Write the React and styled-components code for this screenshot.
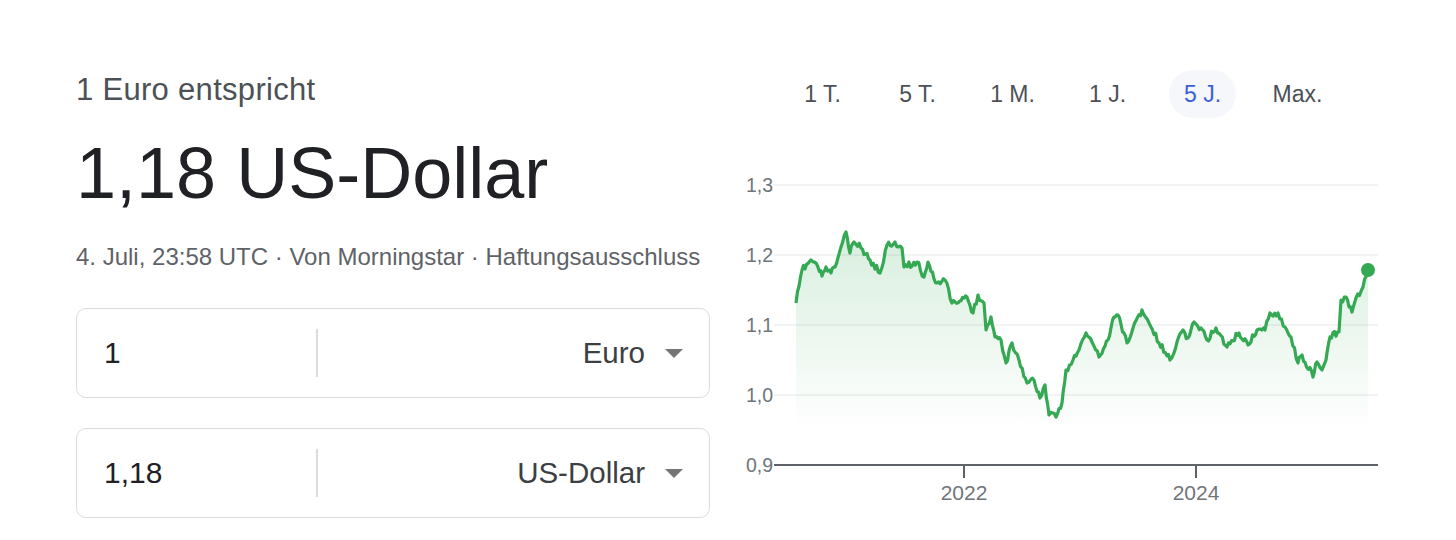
import React from 'react';
import styled, { createGlobalStyle } from 'styled-components';

const GlobalStyle = createGlobalStyle`
  body {
    margin: 0;
    background: #fff;
    font-family: "Liberation Sans", Arial, sans-serif;
  }
`;

const Page = styled.div`
  display: flex;
  gap: 26px;
  padding: 70px 0 0 76px;
`;

const Converter = styled.div`
  width: 634px;
  display: flex;
  flex-direction: column;
`;

const Subtitle = styled.div`
  font-size: 31px;
  line-height: 40px;
  color: #4d5156;
  letter-spacing: 0.3px;
`;

const Result = styled.div`
  margin-top: 21px;
  font-size: 72px;
  line-height: 84px;
  color: #202124;
`;

const Meta = styled.div`
  margin-top: 26px;
  font-size: 24px;
  line-height: 32px;
  color: #5f6368;
  white-space: nowrap;
`;

const Fields = styled.div`
  margin-top: 35px;
  display: flex;
  flex-direction: column;
  gap: 30px;
`;

const Field = styled.div`
  height: 90px;
  box-sizing: border-box;
  border: 1.5px solid #dadce0;
  border-radius: 10px;
  display: flex;
  align-items: center;
`;

const Amount = styled.div`
  width: 239px;
  box-sizing: border-box;
  padding-left: 27px;
  font-size: 30px;
  color: #202124;
`;

const Divider = styled.div`
  width: 1.5px;
  height: 48px;
  background: #dadce0;
`;

const Currency = styled.div`
  flex: 1;
  display: flex;
  justify-content: flex-end;
  align-items: center;
  gap: 20px;
  padding-right: 26px;
  font-size: 29.5px;
  color: #3c4043;
`;

const Caret = styled.span`
  width: 0;
  height: 0;
  border-left: 9px solid transparent;
  border-right: 9px solid transparent;
  border-top: 9px solid #757575;
`;

const ChartPanel = styled.div`
  width: 644px;
  display: flex;
  flex-direction: column;
`;

const Ranges = styled.div`
  display: grid;
  grid-template-columns: repeat(6, 95px);
  justify-content: center;
  margin-left: 4px;
`;

const Range = styled.div`
  justify-self: center;
  height: 48px;
  padding: 0 15px;
  border-radius: 24px;
  display: flex;
  align-items: center;
  font-size: 23px;
  color: ${(p) => (p.$active ? '#3b5fd8' : '#4d5156')};
  background: ${(p) => (p.$active ? '#f5f7fa' : 'transparent')};
`;

const ChartSvg = styled.svg`
  display: block;
  margin-top: 47px;
  font-family: "Liberation Sans", Arial, sans-serif;
`;

const keyPoints = [
  [60, 138], [66, 105], [75, 95], [82, 102], [86, 111], [90, 102], [95, 108], [99, 102],
  [105, 82], [110, 67], [114, 88], [118, 77], [125, 83], [134, 95], [144, 108], [151, 80],
  [159, 77], [166, 83], [168, 102], [181, 97], [188, 112], [192, 97], [201, 118], [209, 115],
  [216, 138], [222, 138], [231, 132], [237, 148], [242, 130], [248, 138], [250, 165], [255, 152],
  [259, 172], [265, 175], [270, 198], [276, 178], [283, 195], [291, 218], [298, 215], [304, 233],
  [309, 220], [313, 250], [320, 252], [326, 238], [330, 205], [337, 195], [343, 185], [350, 168],
  [356, 177], [363, 192], [372, 175], [378, 152], [382, 150], [391, 178], [397, 163], [406, 145],
  [413, 158], [423, 178], [434, 195], [441, 177], [447, 165], [452, 173], [458, 157], [465, 163],
  [471, 175], [480, 163], [491, 182], [503, 168], [512, 180], [521, 165], [529, 165], [534, 148],
  [542, 148], [549, 162], [555, 172], [562, 198], [566, 190], [577, 212], [581, 197], [586, 205],
  [590, 195], [594, 172], [603, 167], [605, 135], [610, 132], [616, 147], [620, 133], [627, 122],
  [632, 105],
];

// jagged daily-ish series between the key points
const buildSeries = () => {
  let seed = 11;
  const rand = () => {
    seed = (seed * 16807) % 2147483647;
    return seed / 2147483647 - 0.5;
  };
  const pts = [keyPoints[0]];
  for (let i = 1; i < keyPoints.length; i++) {
    const [x0, y0] = keyPoints[i - 1];
    const [x1, y1] = keyPoints[i];
    const steps = Math.max(1, Math.round((x1 - x0) / 1.6));
    for (let s = 1; s <= steps; s++) {
      const t = s / steps;
      const noise = s === steps ? 0 : rand() * 6.5;
      pts.push([x0 + (x1 - x0) * t, y0 + (y1 - y0) * t + noise]);
    }
  }
  return pts;
};

const series = buildSeries();
const linePath = series.map(([x, y], i) => `${i ? 'L' : 'M'}${x.toFixed(1)} ${y.toFixed(1)}`).join(' ');
const last = series[series.length - 1];
const areaPath = `${linePath} L${last[0]} 265 L${series[0][0]} 265 Z`;

const grid = [
  { y: 20, label: '1,3' },
  { y: 90, label: '1,2' },
  { y: 160, label: '1,1' },
  { y: 230, label: '1,0' },
];

const years = [
  { x: 228, label: '2022' },
  { x: 460, label: '2024' },
];

const ranges = ['1 T.', '5 T.', '1 M.', '1 J.', '5 J.', 'Max.'];

const RateChart = () => (
  <ChartSvg width="644" height="345" viewBox="0 0 644 345">
    <defs>
      <linearGradient id="area" x1="0" y1="60" x2="0" y2="265" gradientUnits="userSpaceOnUse">
        <stop offset="0" stopColor="#34a853" stopOpacity="0.2" />
        <stop offset="1" stopColor="#34a853" stopOpacity="0" />
      </linearGradient>
    </defs>
    {grid.map((g) => (
      <g key={g.label}>
        <line x1="38" x2="642" y1={g.y} y2={g.y} stroke="#f1f3f4" strokeWidth="2" />
        <text x="37" y={g.y} textAnchor="end" dominantBaseline="central" fontSize="19.5" fill="#70757a">
          {g.label}
        </text>
      </g>
    ))}
    <path d={areaPath} fill="url(#area)" />
    <path d={linePath} fill="none" stroke="#34a853" strokeWidth="3.2" strokeLinejoin="round" />
    <circle cx={last[0]} cy={last[1]} r="7" fill="#34a853" />
    <line x1="38" x2="642" y1="300" y2="300" stroke="#5f6368" strokeWidth="2" />
    <text x="37" y="300" textAnchor="end" dominantBaseline="central" fontSize="19.5" fill="#70757a">
      0,9
    </text>
    {years.map((t) => (
      <g key={t.label}>
        <line x1={t.x} x2={t.x} y1="300" y2="313" stroke="#5f6368" strokeWidth="2" />
        <text x={t.x} y="327" textAnchor="middle" dominantBaseline="central" fontSize="21" fill="#70757a">
          {t.label}
        </text>
      </g>
    ))}
  </ChartSvg>
);

const App = () => (
  <>
    <GlobalStyle />
    <Page>
      <Converter>
        <Subtitle>1 Euro entspricht</Subtitle>
        <Result>1,18 US-Dollar</Result>
        <Meta>4. Juli, 23:58 UTC · Von Morningstar · Haftungsausschluss</Meta>
        <Fields>
          <Field>
            <Amount>1</Amount>
            <Divider />
            <Currency>
              Euro
              <Caret />
            </Currency>
          </Field>
          <Field>
            <Amount>1,18</Amount>
            <Divider />
            <Currency>
              US-Dollar
              <Caret />
            </Currency>
          </Field>
        </Fields>
      </Converter>
      <ChartPanel>
        <Ranges>
          {ranges.map((r) => (
            <Range key={r} $active={r === '5 J.'}>
              {r}
            </Range>
          ))}
        </Ranges>
        <RateChart />
      </ChartPanel>
    </Page>
  </>
);

export default App;
